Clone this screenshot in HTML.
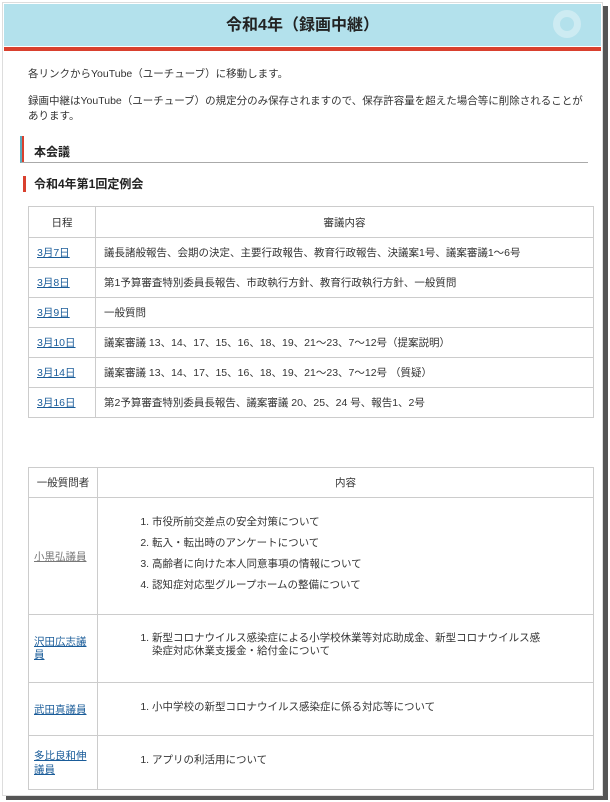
<!DOCTYPE html>
<html><head><meta charset="utf-8"><style>
body{margin:0;background:#fff;width:610px;height:802px;overflow:hidden;position:relative;font-family:"Liberation Sans","Noto Sans CJK JP",sans-serif;color:#333;font-size:11px}
.page{position:absolute;left:2px;top:2px;width:599px;height:792px;background:#fff;border:1px solid #ddd}
.shr{position:absolute;left:603px;top:6px;width:5px;height:794px;background:#555}
.shb{position:absolute;left:6px;top:796px;width:602px;height:4px;background:#555}
.hdr{position:absolute;left:4px;top:4px;width:597px;height:42px;background:#b3e1ec;text-align:center;font-size:16px;font-weight:bold;line-height:44px;color:#222}
.hdr:after{content:"";position:absolute;right:20px;top:6px;width:28px;height:28px;border:7px solid #cdebf2;border-radius:50%;box-sizing:border-box}
.red{position:absolute;left:4px;top:47px;width:597px;height:4px;background:#d9402e}
p{position:absolute;left:28px;margin:0;line-height:15px;font-size:10.5px;white-space:nowrap}
.h2{position:absolute;left:20px;top:136px;width:566px;height:26px;border-bottom:1px solid #aaa;border-left:2px solid #5aaabb;box-shadow:inset 2px 0 0 #d9402e}
.h2 span{position:absolute;left:12px;top:7px;font-size:12px;font-weight:bold;color:#222}
.h3{position:absolute;left:23px;top:176px;height:16px;border-left:3px solid #d9402e;padding-left:8px;font-size:12px;font-weight:bold;line-height:17px;color:#222}
table{position:absolute;left:28px;border-collapse:collapse;width:566px;font-size:10.5px;table-layout:fixed}
td{border:1px solid #ccc;padding:0 8px;vertical-align:middle}
a{color:#1a5c99;text-decoration:underline}
a.g{color:#777}
ol{margin:0;padding-left:22px}
ol li{line-height:14px;margin:0 0 7px}
</style></head><body>
<div class="shr"></div><div class="shb"></div>
<div class="page"></div>
<div class="hdr">令和4年（録画中継）</div>
<div class="red"></div>
<p style="top:67px">各リンクからYouTube（ユーチューブ）に移動します。</p>
<p style="top:94px">録画中継はYouTube（ユーチューブ）の規定分のみ保存されますので、保存許容量を超えた場合等に削除されることが<br>あります。</p>
<div class="h2"><span>本会議</span></div>
<div class="h3">令和4年第1回定例会</div>
<table style="top:206px">
<colgroup><col style="width:67px"><col></colgroup>
<tr style="height:31px"><td style="text-align:center">日程</td><td style="text-align:center">審議内容</td></tr>
<tr style="height:30px"><td><a href="#">3月7日</a></td><td>議長諸般報告、会期の決定、主要行政報告、教育行政報告、決議案1号、議案審議1～6号</td></tr>
<tr style="height:30px"><td><a href="#">3月8日</a></td><td>第1予算審査特別委員長報告、市政執行方針、教育行政執行方針、一般質問</td></tr>
<tr style="height:30px"><td><a href="#">3月9日</a></td><td>一般質問</td></tr>
<tr style="height:30px"><td><a href="#">3月10日</a></td><td>議案審議 13、14、17、15、16、18、19、21～23、7～12号（提案説明）</td></tr>
<tr style="height:30px"><td><a href="#">3月14日</a></td><td>議案審議 13、14、17、15、16、18、19、21～23、7～12号 （質疑）</td></tr>
<tr style="height:30px"><td><a href="#">3月16日</a></td><td>第2予算審査特別委員長報告、議案審議 20、25、24 号、報告1、2号</td></tr>
</table>
<table style="top:467px">
<colgroup><col style="width:69px"><col></colgroup>
<tr style="height:30px"><td style="padding:0 4px;text-align:center;white-space:nowrap">一般質問者</td><td style="text-align:center">内容</td></tr>
<tr style="height:117px"><td style="padding:0 5px"><a class="g" href="#">小黒弘議員</a></td><td style="padding-left:32px;vertical-align:top;padding-top:17px"><ol><li>市役所前交差点の安全対策について</li><li>転入・転出時のアンケートについて</li><li>高齢者に向けた本人同意事項の情報について</li><li>認知症対応型グループホームの整備について</li></ol></td></tr>
<tr style="height:68px"><td style="padding:0 5px;line-height:13px"><a href="#">沢田広志議員</a></td><td style="padding-left:32px;vertical-align:top;padding-top:17px"><ol><li style="line-height:13px">新型コロナウイルス感染症による小学校休業等対応助成金、新型コロナウイルス感<br>染症対応休業支援金・給付金について</li></ol></td></tr>
<tr style="height:53px"><td style="padding:0 5px"><a href="#">武田真議員</a></td><td style="padding-left:32px;vertical-align:top;padding-top:17px"><ol><li>小中学校の新型コロナウイルス感染症に係る対応等について</li></ol></td></tr>
<tr style="height:54px"><td style="padding:0 5px;line-height:14px"><a href="#">多比良和伸<br>議員</a></td><td style="padding-left:32px;vertical-align:top;padding-top:17px"><ol><li>アプリの利活用について</li></ol></td></tr>
</table>
</body></html>
